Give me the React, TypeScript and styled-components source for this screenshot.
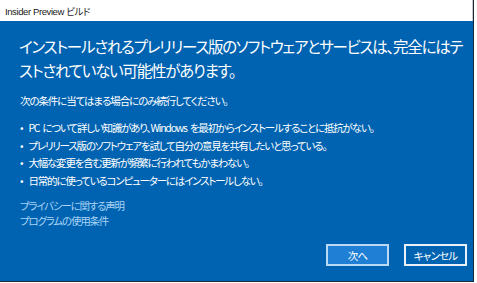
import React from "react";
import styled, { createGlobalStyle } from "styled-components";

const GlobalStyle = createGlobalStyle`
  html, body {
    margin: 0;
    padding: 0;
    background: #ffffff;
  }
  body {
    font-family: "Noto Sans CJK JP", "Liberation Sans", sans-serif;
  }
`;

const Window = styled.div`
  width: 473px;
  height: 281px;
  display: flex;
  flex-direction: column;
  border-right: 1px solid #1b2a3a;
  border-bottom: 1px solid #1b2a3a;
`;

const TitleBar = styled.div`
  height: 21px;
  display: flex;
  align-items: center;
  padding-left: 5px;
  background: #ffffff;
  border-right: 1px solid #c8c8c8;
  font-family: "Liberation Sans", "Noto Sans CJK JP", sans-serif;
  font-size: 9.5px;
  letter-spacing: -0.4px;
  color: #1a1a1a;
  font-feature-settings: "palt";
`;

const Panel = styled.div`
  flex: 1;
  display: flex;
  flex-direction: column;
  background: #0063b1;
  color: #ffffff;
  padding: 13px 6px 15px 19px;
  font-feature-settings: "palt";
`;

const Heading = styled.h1`
  margin: 0;
  font-size: 15.5px;
  font-weight: 400;
  line-height: 24px;
  letter-spacing: -1.25px;
  white-space: nowrap;
`;

const Intro = styled.p`
  margin: 11px 0 0 1px;
  font-size: 10.5px;
  line-height: 16px;
  letter-spacing: -1.1px;
`;

const Conditions = styled.ul`
  margin: 10px 0 0 1px;
  padding: 0;
  list-style: none;
  font-size: 10.5px;
  line-height: 17.7px;
  letter-spacing: -1.2px;
  word-spacing: 2px;
`;

const Condition = styled.li`
  &::before {
    content: "•";
    margin-right: 6px;
  }
`;

const Links = styled.div`
  margin: 8px 0 0 1px;
  display: flex;
  flex-direction: column;
  font-size: 10.5px;
  line-height: 15px;
  letter-spacing: -1.2px;
  color: #a9d3f5;
`;

const Footer = styled.div`
  margin-top: auto;
  display: flex;
  justify-content: flex-end;
  gap: 15px;
`;

const Button = styled.button<{ $primary?: boolean }>`
  width: 63px;
  height: 22px;
  padding: 0;
  font-family: inherit;
  font-size: 10.5px;
  letter-spacing: -0.8px;
  color: #ffffff;
  background: ${(p) => (p.$primary ? "#1f7fd4" : "#0063b1")};
  border: 2px solid ${(p) => (p.$primary ? "#b9d9f5" : "#e8f1fa")};
  font-feature-settings: "palt";
`;

const conditions = [
  "PC について詳しい知識があり、Windows を最初からインストールすることに抵抗がない。",
  "プレリリース版のソフトウェアを試して自分の意見を共有したいと思っている。",
  "大幅な変更を含む更新が頻繁に行われてもかまわない。",
  "日常的に使っているコンピューターにはインストールしない。",
];

const App = () => {
  return (
    <>
      <GlobalStyle />
      <Window>
        <TitleBar>Insider Preview ビルド</TitleBar>
        <Panel>
          <Heading>
            インストールされるプレリリース版のソフトウェアとサービスは、完全にはテ
            <br />
            ストされていない可能性があります。
          </Heading>
          <Intro>次の条件に当てはまる場合にのみ続行してください。</Intro>
          <Conditions>
            {conditions.map((c) => (
              <Condition key={c}>{c}</Condition>
            ))}
          </Conditions>
          <Links>
            <span>プライバシーに関する声明</span>
            <span>プログラムの使用条件</span>
          </Links>
          <Footer>
            <Button $primary>次へ</Button>
            <Button>キャンセル</Button>
          </Footer>
        </Panel>
      </Window>
    </>
  );
};

export default App;
